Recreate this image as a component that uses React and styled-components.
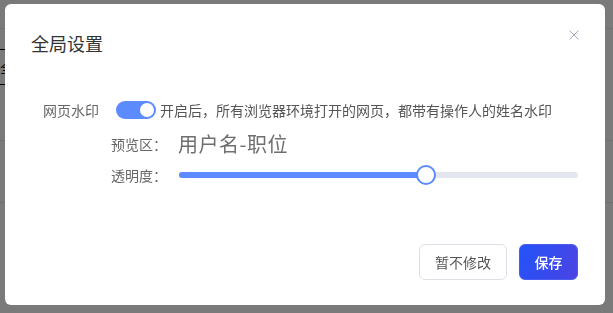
import { useState } from "react";
import styled, { createGlobalStyle } from "styled-components";

const GlobalStyle = createGlobalStyle`
  html, body {
    margin: 0;
    padding: 0;
    background: #ffffff;
    font-family: "Noto Sans CJK SC", "Noto Sans", sans-serif;
  }
`;

const Page = styled.div`
  width: 613px;
  height: 313px;
  overflow: hidden;
  background: #ffffff;
`;

const PageRow = styled.div`
  height: ${(props) => props.$h}px;
  border-bottom: 1px solid ${(props) => props.$line || "#e8e8e8"};
  box-sizing: border-box;
  display: flex;
  align-items: center;
  font-size: 13px;
  color: #333;
`;

const InputBox = styled.div`
  height: 36px;
  width: 120px;
  border-top: 1px solid #000;
  border-bottom: 1px solid #000;
  box-sizing: border-box;
  display: flex;
  align-items: center;
  font-size: 14px;
  margin-top: 20px;
  color: #111;
`;

const Overlay = styled.div`
  position: fixed;
  inset: 0;
  background: rgba(0, 0, 0, 0.52);
  display: flex;
  align-items: flex-start;
  padding: 4px 0 0 5px;
`;

const Modal = styled.div`
  width: 600px;
  height: 301px;
  background: #ffffff;
  border-radius: 6px;
  display: flex;
  flex-direction: column;
  box-sizing: border-box;
`;

const Header = styled.div`
  display: flex;
  justify-content: space-between;
  align-items: flex-start;
  padding: 26px 26px 0 26px;
`;

const Title = styled.div`
  font-size: 18px;
  line-height: 26px;
  color: #333;
`;

const Close = styled.button`
  border: none;
  background: none;
  padding: 0;
  width: 10px;
  height: 10px;
  cursor: pointer;
  display: flex;
`;

const Body = styled.div`
  padding-top: 44px;
  display: flex;
  flex-direction: column;
`;

const SwitchRow = styled.div`
  display: flex;
  align-items: center;
  height: 20px;
  padding-left: 38px;
  font-size: 14px;
`;

const Label = styled.span`
  color: #666;
  width: 56px;
  white-space: nowrap;
  line-height: 20px;
`;

const Toggle = styled.button`
  margin-left: 17px;
  width: 40px;
  height: 18px;
  border-radius: 9px;
  border: none;
  padding: 0;
  background: ${(props) => (props.$on ? "#5b8bff" : "#c8ccd6")};
  display: flex;
  align-items: center;
  justify-content: ${(props) => (props.$on ? "flex-end" : "flex-start")};
  cursor: pointer;
`;

const Knob = styled.span`
  width: 14px;
  height: 14px;
  border-radius: 50%;
  background: #ffffff;
  margin: 0 2px;
`;

const Hint = styled.span`
  margin-left: 4px;
  color: #555;
  line-height: 20px;
  white-space: nowrap;
`;

const SubRow = styled.div`
  display: flex;
  align-items: center;
  padding-left: 106px;
  padding-right: 27px;
  margin-top: ${(props) => props.$top}px;
  height: ${(props) => props.$h}px;
  font-size: 14px;
`;

const Preview = styled.span`
  margin-left: 11px;
  font-size: 20px;
  letter-spacing: 0.5px;
  line-height: 28px;
  color: #6f6f6f;
`;

const Slider = styled.div`
  margin-left: 12px;
  flex: 1;
  height: 6px;
  border-radius: 3px;
  background: #e3e6ee;
  display: flex;
  align-items: center;
`;

const Fill = styled.div`
  height: 6px;
  border-radius: 3px;
  background: #5b8bff;
  display: flex;
  align-items: center;
  justify-content: flex-end;
`;

const Thumb = styled.span`
  width: 20px;
  height: 20px;
  border-radius: 50%;
  box-sizing: border-box;
  border: 2px solid #5b8bff;
  background: #ffffff;
  margin-right: -10px;
  flex-shrink: 0;
`;

const Footer = styled.div`
  margin-top: auto;
  display: flex;
  justify-content: flex-end;
  gap: 12px;
  padding: 0 27px 25px 0;
`;

const Button = styled.button`
  height: 36px;
  width: ${(props) => (props.$primary ? 59 : 88)}px;
  padding: 0;
  border-radius: 6px;
  font-family: "Noto Sans CJK SC", "Noto Sans", sans-serif;
  font-size: 14px;
  cursor: pointer;
  box-sizing: border-box;
  border: 1px solid ${(props) => (props.$primary ? "#4a5cf0" : "#dcdfe6")};
  background: ${(props) =>
    props.$primary ? "linear-gradient(110deg, #2353f8 0%, #4b43e3 100%)" : "#ffffff"};
  color: ${(props) => (props.$primary ? "#ffffff" : "#555")};
  font-weight: ${(props) => (props.$primary ? 500 : 400)};
`;

export default function App() {
  const [on, setOn] = useState(true);
  const opacity = 62;

  return (
    <Page>
      <GlobalStyle />
      <PageRow $h={29} />
      <InputBox>全</InputBox>
      <PageRow $h={56} />
      <PageRow $h={62} />
      <Overlay>
        <Modal>
          <Header>
            <Title>全局设置</Title>
            <Close aria-label="close">
              <svg width="10" height="10" viewBox="0 0 10 10">
                <path d="M0.5 0.5 L9.5 9.5 M9.5 0.5 L0.5 9.5" stroke="#a3a8bd" strokeWidth="1" fill="none" />
              </svg>
            </Close>
          </Header>
          <Body>
            <SwitchRow>
              <Label>网页水印</Label>
              <Toggle $on={on} onClick={() => setOn(!on)}>
                <Knob />
              </Toggle>
              <Hint>开启后，所有浏览器环境打开的网页，都带有操作人的姓名水印</Hint>
            </SwitchRow>
            <SubRow $top={10} $h={28}>
              <Label>预览区：</Label>
              <Preview>用户名-职位</Preview>
            </SubRow>
            <SubRow $top={7} $h={20}>
              <Label>透明度：</Label>
              <Slider>
                <Fill style={{ width: opacity + "%" }}>
                  <Thumb />
                </Fill>
              </Slider>
            </SubRow>
          </Body>
          <Footer>
            <Button>暂不修改</Button>
            <Button $primary>保存</Button>
          </Footer>
        </Modal>
      </Overlay>
    </Page>
  );
}
